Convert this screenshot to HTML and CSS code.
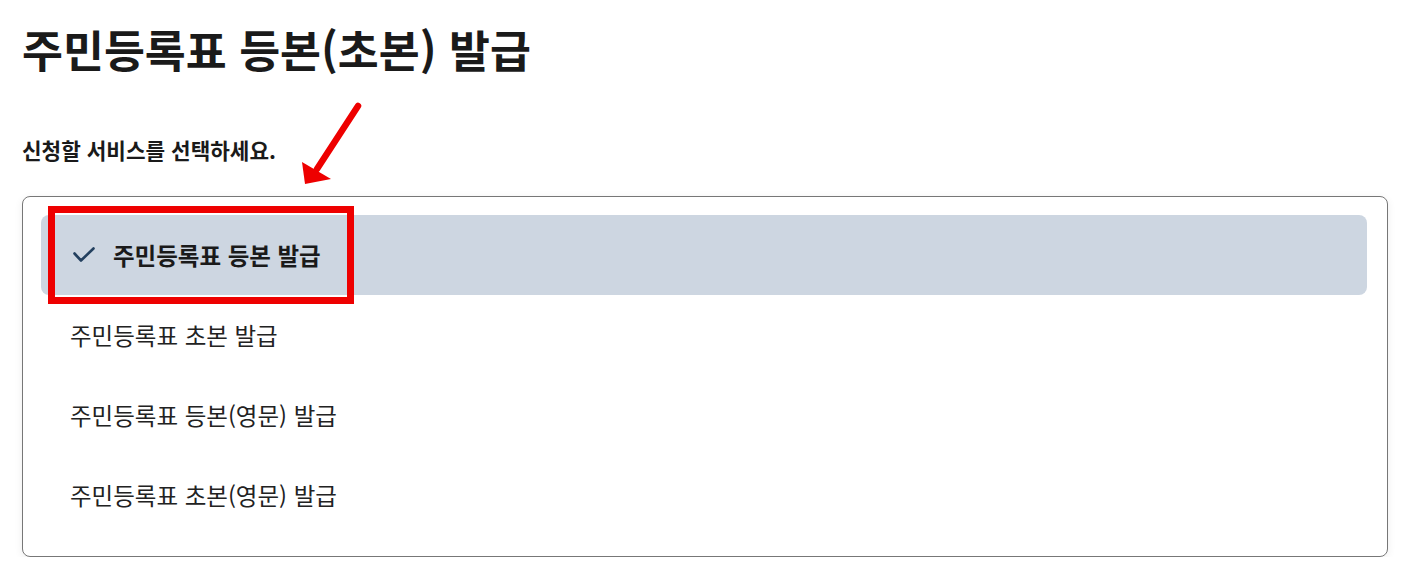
FILE: index.html
```html
<!DOCTYPE html>
<html lang="ko">
<head>
<meta charset="utf-8">
<title>주민등록표 등본(초본) 발급</title>
<link rel="stylesheet" href="styles.css">
</head>
<body>
<main class="page">
  <h1 class="title">주민등록표 등본(초본) 발급</h1>
  <p class="lead">신청할 서비스를 선택하세요.</p>
  <div class="list-wrap">
    <ul class="options">
      <li class="option selected">
        <svg class="check" width="22" height="16" viewBox="0 0 22 16" aria-hidden="true"><polyline points="1.5,6.5 8,13.5 20.5,1.5" fill="none" stroke="#23405f" stroke-width="2.6" stroke-linecap="round" stroke-linejoin="round"/></svg>
        <span>주민등록표 등본 발급</span>
      </li>
      <li class="option">주민등록표 초본 발급</li>
      <li class="option">주민등록표 등본(영문) 발급</li>
      <li class="option">주민등록표 초본(영문) 발급</li>
    </ul>
    <div class="highlight"></div>
  </div>
  <svg class="arrow" width="75" height="100" viewBox="0 0 75 100" aria-hidden="true">
    <line x1="63" y1="11" x2="22" y2="74" stroke="#ee0000" stroke-width="6.5" stroke-linecap="round"/>
    <polygon points="10,89 7,67 36,84" fill="#ee0000"/>
  </svg>
</main>
</body>
</html>
```

FILE: styles.css
```css
html, body {
  margin: 0;
  padding: 0;
  background: #ffffff;
}
body {
  font-family: "Noto Sans CJK KR", "Noto Sans", sans-serif;
  color: #1e1e1e;
}
.page {
  position: relative;
  padding: 24px 22px 0 22px;
}
.title {
  margin: 0;
  font-size: 44.5px;
  line-height: 50px;
  font-weight: 700;
  color: #1a1a1a;
  letter-spacing: 0;
}
.lead {
  margin: 62px 0 0 0;
  font-size: 21.3px;
  line-height: 28px;
  font-weight: 700;
  color: #1a1a1a;
  letter-spacing: 0;
}
.list-wrap {
  position: relative;
  margin-top: 32px;
}
.options {
  list-style: none;
  margin: 0;
  padding: 18px 20px 21px 18px;
  border: 1px solid #777777;
  border-radius: 8px;
  box-shadow: 0 2px 8px rgba(0, 0, 0, 0.07);
  background: #ffffff;
}
.option {
  display: flex;
  align-items: center;
  height: 80px;
  padding-left: 29px;
  font-size: 23.5px;
  color: #222222;
  letter-spacing: 0;
}
.option.selected {
  background: #cdd6e1;
  border-radius: 8px;
  padding-left: 32px;
  font-weight: 700;
  color: #1a1a1a;
  gap: 18px;
}
.check {
  flex: none;
}
.highlight {
  position: absolute;
  left: 26px;
  top: 10px;
  width: 292px;
  height: 84px;
  border: 7px solid #ee0000;
}
.arrow {
  position: absolute;
  left: 295px;
  top: 95px;
}
```
